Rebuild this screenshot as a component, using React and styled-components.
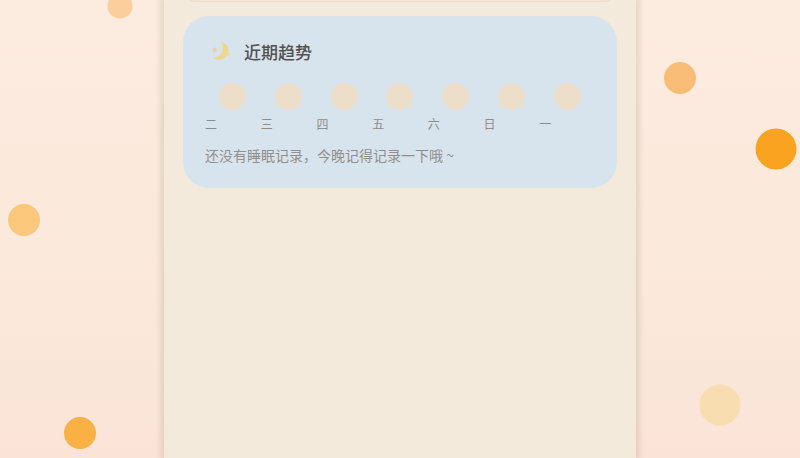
import React from 'react';
import styled, { createGlobalStyle } from 'styled-components';

const GlobalStyle = createGlobalStyle`
  * {
    box-sizing: border-box;
  }

  body {
    margin: 0;
    font-family: "Noto Sans CJK SC", sans-serif;
    background-color: #fbe8dc;
  }
`;

const Page = styled.div`
  position: relative;
  display: flex;
  justify-content: center;
  min-height: 100vh;
  overflow: hidden;
  background: linear-gradient(180deg, #fcebdf 0%, #fbe9db 55%, #fae6d9 85%, #fce3d8 100%);
`;

const Bubble = styled.span`
  position: absolute;
  left: ${({ $left }) => $left};
  top: ${({ $top }) => $top};
  width: ${({ $size }) => $size}px;
  height: ${({ $size }) => $size}px;
  border-radius: 50%;
  background-color: ${({ $color }) => $color};
  transform: translate(-50%, -50%);
`;

const Panel = styled.main`
  position: relative;
  width: 100%;
  max-width: 472px;
  padding: 0 19px 24px;
  background-color: #f3eadc;
  box-shadow: 0 0 6px 3px rgba(130, 105, 80, 0.2);
`;

const PreviousCard = styled.div`
  height: 24px;
  margin: -22px 0 14px;
  border: 1px solid #efdccb;
  border-radius: 24px;
  background-color: #f3e6d9;
`;

const TrendCard = styled.section`
  padding: 23px 22px 21px;
  border-radius: 26px;
  background-color: #d8e4ed;
`;

const CardHeader = styled.header`
  display: flex;
  align-items: center;
  gap: 11px;
  padding-left: 4px;
`;

const CardTitle = styled.h2`
  margin: 0;
  font-size: 17px;
  font-weight: 500;
  line-height: 26px;
  color: #55504e;
`;

const Week = styled.ul`
  display: grid;
  grid-template-columns: repeat(7, 1fr);
  margin: 18px 0 0;
  padding: 0;
  list-style: none;
`;

const Day = styled.li`
  display: flex;
  flex-direction: column;
  gap: 6px;
`;

const DayMark = styled.span`
  align-self: center;
  width: 27px;
  height: 27px;
  border-radius: 50%;
  background-color: #ecdec9;
`;

const DayLabel = styled.span`
  font-size: 12px;
  line-height: 16px;
  color: #8f8b89;
`;

const EmptyHint = styled.p`
  margin: 11px 0 0;
  font-size: 14px;
  line-height: 24px;
  color: #928e8c;
`;

const bubbles = [
  { left: '15%', top: '1.4%', size: 25, color: '#fbce9b' },
  { left: '3%', top: '48%', size: 32, color: '#fbc87c' },
  { left: '10%', top: '94.6%', size: 32, color: '#f9b044' },
  { left: '85%', top: '17%', size: 32, color: '#fabd77' },
  { left: '97%', top: '32.6%', size: 41, color: '#faa321' },
  { left: '90%', top: '88.5%', size: 41, color: '#f8ddb0' },
];

const days = ['二', '三', '四', '五', '六', '日', '一'];

const MoonIcon = () => (
  <svg width="24" height="24" viewBox="0 0 24 24" fill="#efd68e" aria-hidden="true">
    <path d="M11.800 2C16.500 2.500 19.500 6 19.400 10.600C19.300 15.900 15.300 20 10.100 20C7.600 20 5.300 19.200 3.800 17.600C8.300 17.300 11.700 15.300 12.900 12.200C14.200 8.800 13.900 5.200 11.800 2Z" />
    <path d="M5.900 7l1 1.600 1.800.5-1.200 1.500.1 1.900-1.700-.7-1.800.7.1-1.900L3 9.100l1.800-.5z" fill="#ead0a0" />
    <path d="M19.200 12.800l.6 1.300 1.300.6-1.300.6-.6 1.300-.6-1.300-1.300-.6 1.300-.6z" />
  </svg>
);

const App = () => {
  return (
    <>
      <GlobalStyle />
      <Page>
        {bubbles.map(({ left, top, size, color }) => (
          <Bubble key={left} $left={left} $top={top} $size={size} $color={color} />
        ))}
        <Panel>
          <PreviousCard />
          <TrendCard>
            <CardHeader>
              <MoonIcon />
              <CardTitle>近期趋势</CardTitle>
            </CardHeader>
            <Week>
              {days.map((day) => (
                <Day key={day}>
                  <DayMark />
                  <DayLabel>{day}</DayLabel>
                </Day>
              ))}
            </Week>
            <EmptyHint>还没有睡眠记录，今晚记得记录一下哦 ~</EmptyHint>
          </TrendCard>
        </Panel>
      </Page>
    </>
  );
};

export default App;
